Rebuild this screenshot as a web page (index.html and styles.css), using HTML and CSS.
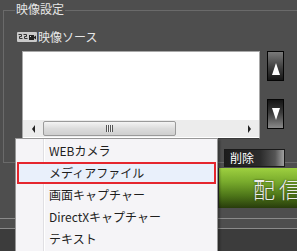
FILE: index.html
```html
<!DOCTYPE html>
<html lang="ja">
<head>
  <meta charset="UTF-8" />
  <title>映像設定</title>
  <link rel="stylesheet" href="styles.css">
</head>
<body>
  <div class="screen">
    <div class="group">
      <div class="group-title">映像設定</div>
      <div class="source-head">
        <svg class="source-icon" width="20" height="10" viewBox="0 0 20 10">
          <rect x="0" y="0" width="20" height="10" rx="1" fill="#c9c9c9"/>
          <path d="M1.5 2.5h3v2h-2v2h3M6.5 2.5h3v2h-2v2h3" fill="none" stroke="#333" stroke-width="1"/>
          <rect x="12" y="3" width="5" height="5" fill="#222"/>
          <path d="M17 5l2-1.5v4L17 6z" fill="#222"/>
          <rect x="13" y="4" width="1" height="1" fill="#ddd"/>
        </svg>
        <span>映像ソース</span>
      </div>
      <div class="source-row">
        <div class="list">
          <div class="list-body"></div>
          <div class="hscroll">
            <span class="arrow arrow-left"></span>
            <div class="track">
              <div class="thumb"><span class="grip"></span></div>
            </div>
            <span class="arrow arrow-right"></span>
          </div>
        </div>
        <div class="order">
          <button class="move move-up"><span class="tri"></span></button>
          <button class="move move-down"><span class="tri"></span></button>
        </div>
      </div>
      <div class="source-actions">
        <button class="btn">追加</button>
        <button class="btn">削除</button>
      </div>
    </div>

    <div class="live-row">
      <button class="live">配信</button>
    </div>

    <div class="footer">
      <div class="footer-mid"></div>
      <div class="footer-low"></div>
    </div>

    <ul class="menu">
      <li class="menu-item">WEBカメラ</li>
      <li class="menu-item active">メディアファイル</li>
      <li class="menu-item">画面キャプチャー</li>
      <li class="menu-item">DirectXキャプチャー</li>
      <li class="menu-item">テキスト</li>
    </ul>
  </div>
</body>
</html>
```

FILE: styles.css
```css
body {
  margin: 0;
  background: #4e4e4e;
  font-family: "Noto Sans CJK JP", "Noto Sans", sans-serif;
  font-size: 12px;
  color: #e6e6e6;
}
.screen {
  position: relative;
  width: 297px;
  height: 251px;
  overflow: hidden;
}
.group {
  box-sizing: border-box;
  margin: 10px 0 0 3px;
  width: 310px;
  height: 153px;
  border: 1px solid #6a6a6a;
  border-right: none;
}
.group-title {
  display: inline-block;
  margin: -10px 0 0 11px;
  padding: 0 1px;
  line-height: 16px;
  background: #4e4e4e;
  vertical-align: top;
}
.source-head {
  display: flex;
  align-items: center;
  margin: 1px 0 0 13px;
  height: 16px;
  line-height: 16px;
}
.source-icon {
  margin-right: 1px;
}
.source-row {
  display: flex;
  margin: 6px 0 0 18px;
}
.list {
  box-sizing: border-box;
  width: 238px;
  height: 88px;
  background: #fff;
  border: 1px solid #a8a8a8;
  border-bottom-color: #3a3a3a;
  display: flex;
  flex-direction: column;
}
.list-body {
  flex: 1;
}
.hscroll {
  display: flex;
  align-items: center;
  height: 17px;
  margin-bottom: 1px;
  background: #ececec;
}
.arrow {
  width: 20px;
  height: 17px;
  display: flex;
  align-items: center;
  justify-content: center;
}
.arrow::before {
  content: "";
  border: 4px solid transparent;
}
.arrow-left::before {
  border-right: 3px solid #222;
  border-left: none;
}
.arrow-right::before {
  border-left: 3px solid #222;
  border-right: none;
}
.track {
  flex: 1;
  height: 17px;
}
.thumb {
  box-sizing: border-box;
  width: 133px;
  height: 15px;
  margin-top: 1px;
  border: 1px solid #9a9a9a;
  border-radius: 2px;
  background: linear-gradient(#f4f4f4, #dcdcdc 50%, #cfcfcf);
  display: flex;
  align-items: center;
  justify-content: center;
}
.grip {
  width: 7px;
  height: 7px;
  background: repeating-linear-gradient(to right, #555 0 1px, #f0f0f0 1px 2px);
}
.order {
  display: flex;
  flex-direction: column;
  gap: 18px;
  margin-left: 7px;
}
.move {
  box-sizing: border-box;
  width: 17px;
  height: 30px;
  padding: 0;
  border: 1px solid #050505;
  display: flex;
  align-items: center;
  justify-content: center;
}
.move-up {
  background: linear-gradient(#7a7a7a, #3a3a3a 60%, #161616);
}
.move-down {
  background: linear-gradient(#141414, #3a3a3a 45%, #8a8a8a);
}
.tri {
  width: 0;
  height: 0;
  border-left: 4px solid transparent;
  border-right: 4px solid transparent;
}
.move-up .tri {
  border-bottom: 12px solid #fff;
  margin-top: 6px;
}
.move-down .tri {
  border-top: 12px solid #fff;
  margin-top: 0;
}
.source-actions {
  display: flex;
  gap: 9px;
  margin: 10px 0 0 150px;
}
.btn {
  box-sizing: border-box;
  width: 61px;
  height: 18px;
  padding: 0 0 0 5px;
  text-align: left;
  font-family: inherit;
  font-size: 12px;
  line-height: 16px;
  color: #fff;
  border: 1px solid #1a1a1a;
  background: linear-gradient(to right, #1c1c1c, #2c2c2c 60%, #555 85%, #a0a0a0);
}
.live-row {
  margin-top: 5px;
  padding-left: 218px;
}
.live {
  box-sizing: border-box;
  width: 79px;
  height: 40px;
  padding: 0 0 0 34px;
  text-align: left;
  white-space: nowrap;
  overflow: hidden;
  font-family: inherit;
  font-size: 22px;
  font-weight: 300;
  letter-spacing: 4px;
  color: #ececec;
  text-shadow: 0 0 2px #2a3a10;
  border: none;
  border-left: 1px solid #2a2a2a;
  background: linear-gradient(#9ed040, #78aa2c 35%, #4c7418 70%, #283c0c);
}
.footer {
  margin-top: 10px;
  border-top: 1px solid #8a8a8a;
}
.footer-mid {
  height: 9px;
}
.footer-low {
  height: 30px;
  border-top: 1px solid #8a8a8a;
  background: #3c3c3c;
}
.menu {
  position: absolute;
  left: 15px;
  top: 138px;
  box-sizing: border-box;
  width: 203px;
  height: 130px;
  margin: 0;
  padding: 1px 1px 0;
  list-style: none;
  background: #f5f4f7;
  border: 1px solid #979797;
  box-shadow: 2px 2px 2px rgba(0,0,0,0.3);
}
.menu::before {
  content: "";
  position: absolute;
  left: 27px;
  top: 0;
  bottom: 0;
  width: 1px;
  background: #e0dfe3;
  border-right: 1px solid #fff;
}
.menu-item {
  position: relative;
  box-sizing: border-box;
  height: 22px;
  line-height: 18px;
  padding-left: 30px;
  border: 2px solid transparent;
  color: #1e1e1e;
  font-size: 12px;
}
.menu-item.active {
  border-color: #e5262e;
  background: #e9f0fb;
}
```
